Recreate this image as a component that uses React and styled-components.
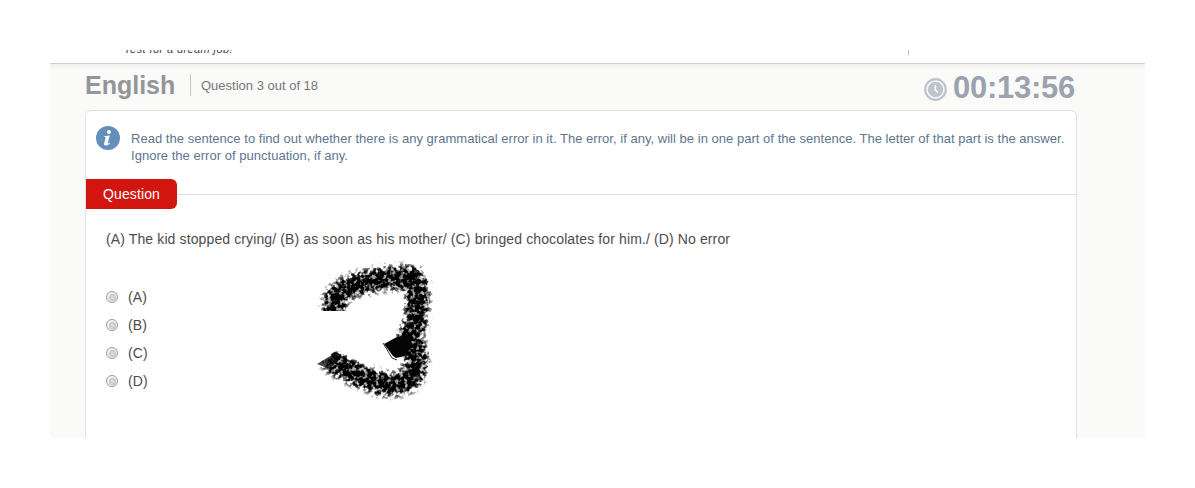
import React from 'react';
import styled, { createGlobalStyle } from 'styled-components';

const GlobalStyle = createGlobalStyle`
  * { box-sizing: border-box; }
  body {
    margin: 0;
    background: #fff;
    font-family: "Liberation Sans", Arial, sans-serif;
  }
`;

const Page = styled.div`
  width: 1195px;
  height: 488px;
  padding: 50px;
  overflow: hidden;
`;

const Screen = styled.main`
  display: flex;
  flex-direction: column;
  width: 1095px;
  height: 388px;
  overflow: hidden;
  background: #fafaf8;
`;

const Masthead = styled.header`
  display: flex;
  justify-content: space-between;
  align-items: flex-end;
  flex: none;
  height: 14px;
  padding: 0 236px 8px 74px;
  overflow: hidden;
  background: #fff;
  border-bottom: 1px solid #cfcfcf;
`;

const Tagline = styled.div`
  height: 15px;
  margin-bottom: -2px;
  font-size: 11px;
  line-height: 15px;
  font-style: italic;
  letter-spacing: 0.4px;
  white-space: nowrap;
  color: #444;
`;

const MastRule = styled.div`
  width: 1px;
  height: 20px;
  background: #bbb;
`;

const TitleBar = styled.section`
  display: flex;
  justify-content: space-between;
  flex: none;
  height: 46px;
  padding: 0 70px 0 35px;
  background: linear-gradient(#f1f1f0, #fafaf8 6px);
`;

const TitleGroup = styled.div`
  display: flex;
  align-items: flex-start;
`;

const Subject = styled.h1`
  margin: 6px 0 0;
  width: 105px;
  font-size: 25px;
  line-height: 31px;
  color: #929699;
`;

const Progress = styled.div`
  height: 22px;
  margin-top: 10px;
  padding-left: 10px;
  border-left: 1px solid #c9c9c9;
  font-size: 13px;
  line-height: 23px;
  white-space: nowrap;
  color: #77787a;
`;

const Timer = styled.div`
  display: flex;
  align-items: flex-start;
  font-size: 31px;
  font-weight: bold;
  line-height: 34px;
  letter-spacing: -0.25px;
  color: #9aa3ae;
  padding-top: 7px;

  svg { margin: 7px 6px 0 0; }
`;

const Card = styled.section`
  display: flex;
  flex-direction: column;
  position: relative;
  flex: none;
  width: 992px;
  height: 340px;
  margin-left: 35px;
  background: #fff;
  border: 1px solid #dfe2e4;
  border-radius: 6px 6px 0 0;
`;

const Instructions = styled.div`
  display: flex;
  flex: none;
  height: 68px;
  padding: 15px 0 0 10px;

  svg { flex: none; margin-right: 11px; }

  p {
    margin: 4px 0 0;
    font-size: 13px;
    line-height: 17px;
    letter-spacing: 0.028px;
    white-space: nowrap;
    color: #5d7690;
  }
`;

const SectionHead = styled.div`
  display: flex;
  align-items: center;
  flex: none;
  height: 30px;

  &::after {
    content: '';
    flex: 1;
    height: 1px;
    background: #dfdfe2;
  }
`;

const SectionLabel = styled.h2`
  width: 91px;
  height: 30px;
  margin: 0;
  border-radius: 0 6px 6px 0;
  background: #d3150f;
  font-size: 14px;
  font-weight: normal;
  line-height: 30px;
  letter-spacing: 0.1px;
  text-align: center;
  color: #fff;
`;

const Prompt = styled.p`
  margin: 22px 0 0 20px;
  font-size: 14px;
  line-height: 17px;
  letter-spacing: 0.12px;
  white-space: nowrap;
  color: #4c4c4e;
`;

const Options = styled.div`
  display: flex;
  flex-direction: column;
  margin: 35px 0 0 20px;
`;

const Option = styled.label`
  display: flex;
  align-items: center;
  height: 28px;
  font-size: 14px;
  letter-spacing: 0.12px;
  color: #4c4c4e;
`;

const Radio = styled.input`
  appearance: none;
  width: 12px;
  height: 12px;
  margin: 0 10px 0 0;
  border: 1px solid #999;
  border-radius: 50%;
  background: radial-gradient(circle at 55% 55%, #dedede 0, #c8c8c8 3.2px, #f4f4f4 4.2px, #f4f4f4 100%);
`;

const Scribble = styled.svg`
  position: absolute;
  left: 224px;
  top: 144px;
`;

const ClockIcon = () => (
  <svg width="23" height="23" viewBox="0 0 23 23">
    <circle cx="11.5" cy="11.5" r="10.3" fill="none" stroke="#bdc4cb" strokeWidth="2.2" />
    <circle cx="11.5" cy="11.5" r="7.7" fill="#bdc4cb" />
    <path d="M11.3 7v5l2.7 2.6" fill="none" stroke="#fafaf8" strokeWidth="1.7" />
  </svg>
);

const InfoIcon = () => (
  <svg width="24" height="24" viewBox="0 0 24 24">
    <circle cx="12" cy="12" r="12" fill="#648fba" />
    <circle cx="12.9" cy="5.9" r="2" fill="#fff" />
    <path d="M8.3 10.2 13.8 9.4 11.8 16.8c-.2.9.4.8 1.8-.4l.6.6c-1.5 1.8-3 2.6-4.5 2.5-1.5-.1-1.9-1-1.5-2.5l1.4-5.1c.1-.6-.3-.8-1.4-.8Z" fill="#fff" />
  </svg>
);

const BrushMark = () => (
  <Scribble width="130" height="150" viewBox="310 255 130 150">
    <defs>
      <filter id="charcoal" filterUnits="userSpaceOnUse" x="310" y="255" width="130" height="150" colorInterpolationFilters="sRGB">
        <feGaussianBlur in="SourceAlpha" stdDeviation="4" result="soft" />
        <feTurbulence type="fractalNoise" baseFrequency="0.25" numOctaves="2" seed="8" />
        <feColorMatrix values="0 0 0 0 0  0 0 0 0 0  0 0 0 0 0  3 0 0 0 -0.9" result="grain" />
        <feComposite in="soft" in2="grain" operator="arithmetic" k1="0" k2="1.7" k3="1.1" k4="-1.3" />
        <feGaussianBlur stdDeviation="0.6" />
      </filter>
      <clipPath id="cut">
        <path d="M310 255H440V405H310V369L318 363L337 350L360 362L383 344L396 330L385 311H310Z" />
      </clipPath>
    </defs>
    <g clipPath="url(#cut)">
      <g filter="url(#charcoal)">
        <path d="M334 325V308Q333 296 345 289Q366 278 411 277Q420 280 417 306Q417 326 408 340Q418 347 416 363Q415 379 402 383Q388 388 368 379Q350 373 327 358" fill="none" stroke="#000" strokeWidth="24" strokeLinejoin="round" />
      </g>
    </g>
    <path d="M384 344 395 338 407 334 412 346 405 356 396 358 393 356Z" fill="#050505" />
    <path d="m383 343 9 15 5 2" fill="none" stroke="#333" strokeWidth="1" />
    <path d="m317 364 20-12 5 4-12 13Z" fill="#080808" opacity=".75" />
  </Scribble>
);

const choices = ['A', 'B', 'C', 'D'];

export default function App() {
  return (
    <Page>
      <GlobalStyle />
      <Screen>
        <Masthead>
          <Tagline>Test for a dream job!</Tagline>
          <MastRule />
        </Masthead>
        <TitleBar>
          <TitleGroup>
            <Subject>English</Subject>
            <Progress>Question 3 out of 18</Progress>
          </TitleGroup>
          <Timer><ClockIcon />00:13:56</Timer>
        </TitleBar>
        <Card>
          <Instructions>
            <InfoIcon />
            <p>
              Read the sentence to find out whether there is any grammatical error in it. The error, if any, will be in one part of the sentence. The letter of that part is the answer.
              <br />
              Ignore the error of punctuation, if any.
            </p>
          </Instructions>
          <SectionHead><SectionLabel>Question</SectionLabel></SectionHead>
          <Prompt>(A) The kid stopped crying/ (B) as soon as his mother/ (C) bringed chocolates for him./ (D) No error</Prompt>
          <Options>
            {choices.map((choice) => (
              <Option key={choice}>
                <Radio type="radio" name="answer" />
                ({choice})
              </Option>
            ))}
          </Options>
          <BrushMark />
        </Card>
      </Screen>
    </Page>
  );
}
